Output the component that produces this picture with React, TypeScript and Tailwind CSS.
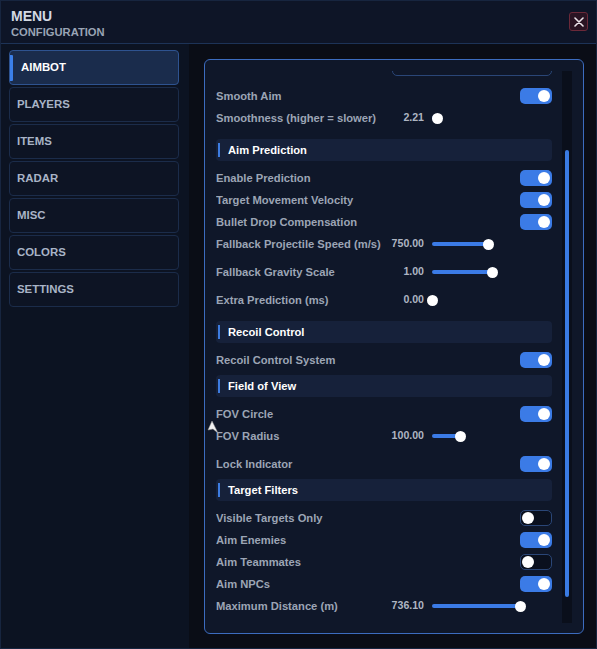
import React from "react";

type Row =
  | { kind: "toggle"; label: string; on: boolean }
  | { kind: "slider"; label: string; value: string; fill: number }
  | { kind: "header"; label: string };

const navItems = ["AIMBOT", "PLAYERS", "ITEMS", "RADAR", "MISC", "COLORS", "SETTINGS"];

const rows: Row[] = [
  { kind: "toggle", label: "Smooth Aim", on: true },
  { kind: "slider", label: "Smoothness (higher = slower)", value: "2.21", fill: 5 },
  { kind: "header", label: "Aim Prediction" },
  { kind: "toggle", label: "Enable Prediction", on: true },
  { kind: "toggle", label: "Target Movement Velocity", on: true },
  { kind: "toggle", label: "Bullet Drop Compensation", on: true },
  { kind: "slider", label: "Fallback Projectile Speed (m/s)", value: "750.00", fill: 56 },
  { kind: "slider", label: "Fallback Gravity Scale", value: "1.00", fill: 60 },
  { kind: "slider", label: "Extra Prediction (ms)", value: "0.00", fill: 0 },
  { kind: "header", label: "Recoil Control" },
  { kind: "toggle", label: "Recoil Control System", on: true },
  { kind: "header", label: "Field of View" },
  { kind: "toggle", label: "FOV Circle", on: true },
  { kind: "slider", label: "FOV Radius", value: "100.00", fill: 28 },
  { kind: "toggle", label: "Lock Indicator", on: true },
  { kind: "header", label: "Target Filters" },
  { kind: "toggle", label: "Visible Targets Only", on: false },
  { kind: "toggle", label: "Aim Enemies", on: true },
  { kind: "toggle", label: "Aim Teammates", on: false },
  { kind: "toggle", label: "Aim NPCs", on: true },
  { kind: "slider", label: "Maximum Distance (m)", value: "736.10", fill: 88 },
];

function Toggle({ on }: { on: boolean }) {
  if (on) {
    return (
      <div className="ml-auto flex h-[16px] w-[32px] items-center justify-end rounded-[5px] bg-[#3b7be6] pr-[2px]">
        <div className="h-[12px] w-[12px] rounded-full bg-white" />
      </div>
    );
  }
  return (
    <div className="ml-auto flex h-[16px] w-[32px] items-center rounded-[5px] border border-[#2a4677] bg-[#0a101e] pl-[1px]">
      <div className="h-[12px] w-[12px] rounded-full bg-white" />
    </div>
  );
}

function SettingRow({ row }: { row: Row }) {
  if (row.kind === "header") {
    return (
      <div className="mb-[6px] mt-[4px] flex h-[22px] items-center rounded-[4px] bg-[#16213a] pl-[2px]">
        <div className="h-[14px] w-[2px] bg-[#3d7ce0]" />
        <span className="ml-[8px] text-[11.2px] font-bold text-white">{row.label}</span>
      </div>
    );
  }
  if (row.kind === "slider") {
    return (
      <div className="mb-[6px] flex h-[22px] items-center">
        <span className="w-[160px] shrink-0 whitespace-nowrap text-[11.2px] font-bold text-[#9ca5b5]">
          {row.label}
        </span>
        <span className="w-[48px] shrink-0 text-right text-[10.6px] font-bold text-[#aeb5c2]">
          {row.value}
        </span>
        <div className="ml-[8px] flex items-center">
          <div className="h-[4px] rounded-full bg-[#3b7be6]" style={{ width: row.fill }} />
          <div className="ml-[-5px] h-[11px] w-[11px] rounded-full bg-white" />
        </div>
      </div>
    );
  }
  return (
    <div className="flex h-[22px] items-center">
      <span className="whitespace-nowrap text-[11.2px] font-bold text-[#9ca5b5]">{row.label}</span>
      <Toggle on={row.on} />
    </div>
  );
}

export default function App() {
  return (
    <div
      className="relative flex h-[649px] w-[597px] flex-col overflow-hidden border border-[#17253f] bg-[#0a0e17]"
      style={{ fontFamily: '"Liberation Sans", Arial, sans-serif' }}
    >
      {/* title bar */}
      <div className="flex h-[43px] shrink-0 items-start justify-between border-b border-[#1d3357] bg-[#0e1527] pl-[10px] pr-[8px] pt-[7px]">
        <div className="flex flex-col">
          <span className="text-[14px] font-bold leading-[16px] text-[#d3d9e3]">MENU</span>
          <span className="mt-[1px] text-[11.2px] font-bold leading-[14px] text-[#9aa4b5]">CONFIGURATION</span>
        </div>
        <button className="mt-[4px] flex h-[19px] w-[19px] items-center justify-center rounded-[3px] border border-[#6b2939] bg-[#2a1423]">
          <svg width="10" height="10" viewBox="0 0 10 10">
            <path d="M1 1L9 9M9 1L1 9" stroke="#ece4ea" strokeWidth="1.6" strokeLinecap="round" />
          </svg>
        </button>
      </div>

      <div className="flex flex-1">
        {/* sidebar */}
        <div className="flex w-[188px] shrink-0 flex-col gap-[2px] bg-[#0c1322] pl-[8px] pr-[10px] pt-[6px]">
          {navItems.map((item, i) =>
            i === 0 ? (
              <div
                key={item}
                className="flex h-[35px] items-center rounded-[4px] border border-[#2e5390] bg-[#1a2c4c]"
              >
                <div className="h-[26px] w-[3px] rounded-r-[1px] bg-[#3b7fe8]" />
                <span className="ml-[8px] text-[11.4px] font-bold text-white">{item}</span>
              </div>
            ) : (
              <div
                key={item}
                className="flex h-[35px] items-center rounded-[4px] border border-[#1b2c4a] bg-[#0d1424] pl-[7px]"
              >
                <span className="text-[11.4px] font-bold text-[#a9b4c7]">{item}</span>
              </div>
            )
          )}
        </div>

        {/* content */}
        <div className="flex-1 bg-[#0a0d16] pl-[15px] pt-[15px]">
          <div className="flex h-[575px] w-[380px] rounded-[6px] border border-[#3c6cbf] bg-[#0f1729] pb-[10px] pl-[11px] pr-[10px] pt-[11px]">
            <div className="flex w-[336px] flex-col overflow-hidden">
              <div className="ml-auto mt-[-19px] h-[24px] w-[160px] shrink-0 rounded-[5px] border border-[#2a4677]" />
              <div className="mt-[9px] flex flex-col">
                {rows.map((row) => (
                  <SettingRow key={row.label} row={row} />
                ))}
              </div>
            </div>
            <div className="ml-[10px] flex w-[10px] flex-col bg-[#0a0f1b] pb-[26px] pt-[79px]">
              <div className="mx-auto w-[4px] flex-1 rounded-[2px] bg-[#3a7be2]" />
            </div>
          </div>
        </div>
      </div>

      {/* mouse cursor */}
      <svg className="absolute left-[206px] top-[419px]" width="13" height="14" viewBox="0 0 13 14">
        <polygon points="5,1 1,10 6,9 11,13" fill="#f2f2f2" stroke="#9a9a9a" strokeWidth="0.5" />
      </svg>
    </div>
  );
}
